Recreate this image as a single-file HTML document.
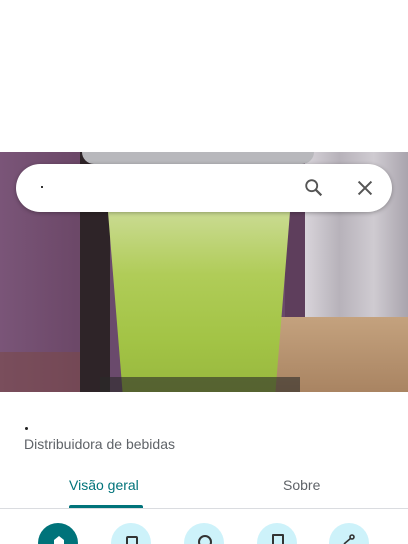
<!DOCTYPE html>
<html style="height:544px;overflow:hidden"><head><style>
body{margin:0;width:408px;height:544px;overflow:hidden;background:#fff;font-family:"Liberation Sans",Roboto,sans-serif;position:relative}
.ph{position:absolute;left:0;top:152px;width:408px;height:240px;overflow:hidden;background:#6a4a6c}
.ph div{position:absolute}
.sb{position:absolute;left:16px;top:164px;width:376px;height:48px;background:#fff;border-radius:24px;box-shadow:0 1px 4px rgba(0,0,0,.3)}
.c{position:absolute;top:523px;width:40px;height:40px;border-radius:50%;background:#cdf2fa}
</style></head><body>
<div class="ph">
 <div style="left:0;top:0;width:82px;height:240px;background:linear-gradient(90deg,#7a5578,#6b4767)"></div>
 <div style="left:0;top:200px;width:90px;height:40px;background:#7a4a4a;opacity:.6"></div>
 <div style="left:80px;top:0;width:30px;height:240px;background:#2e2428"></div>
 <div style="left:285px;top:0;width:22px;height:240px;background:#5e3e5c"></div>
 <div style="left:305px;top:0;width:103px;height:170px;background:linear-gradient(90deg,#d8d4da,#b7b2ba,#cfcbd1,#a9a4ad)"></div>
 <div style="left:275px;top:165px;width:133px;height:75px;background:linear-gradient(180deg,#c4a27e,#a98462)"></div>
 <div style="left:82px;top:0;width:232px;height:12px;background:#b8b8bc;border-radius:0 0 20px 20px"></div>
 <div style="left:108px;top:60px;width:182px;height:180px;background:linear-gradient(180deg,#cadb92,#b0cc58 35%,#a3c446 70%,#98b83e);clip-path:polygon(0 0,100% 0,92% 100%,8% 100%)"></div>
 <div style="left:100px;top:225px;width:200px;height:15px;background:#2a2a28;opacity:.6"></div>
</div>
<div class="sb">
 <div style="position:absolute;left:25px;top:22px;width:2px;height:2px;background:#333"></div>
 <svg style="position:absolute;left:287px;top:13px" width="22" height="22" viewBox="0 0 24 24"><circle cx="9.5" cy="9.5" r="6" fill="none" stroke="#555" stroke-width="2"/><path d="M14 14l6 6" stroke="#555" stroke-width="2.4"/></svg>
 <svg style="position:absolute;left:338px;top:13px" width="22" height="22" viewBox="0 0 24 24"><path d="M5 5l14 14M19 5L5 19" stroke="#555" stroke-width="2.2"/></svg>
</div>
<div style="position:absolute;left:25px;top:427px;width:3px;height:3px;background:#222;border-radius:50%"></div>
<div style="position:absolute;left:24px;top:436px;font-size:14px;color:#5f6368">Distribuidora de bebidas</div>
<div style="position:absolute;left:69px;top:477px;font-size:14px;color:#00737a">Visão geral</div>
<div style="position:absolute;left:283px;top:477px;font-size:14px;color:#5f6368">Sobre</div>
<div style="position:absolute;left:69px;top:505px;width:74px;height:3px;background:#00737a;border-radius:2px 2px 0 0"></div>
<div style="position:absolute;left:0;top:508px;width:408px;height:1px;background:#dadce0"></div>
<div class="c" style="left:38px;background:#00737a"></div>
<div class="c" style="left:111px"></div>
<div class="c" style="left:184px"></div>
<div class="c" style="left:257px"></div>
<div class="c" style="left:329px"></div>
<svg style="position:absolute;left:52px;top:535px" width="14" height="9"><path d="M2 9V5l5-4 5 4v4" fill="#fff"/></svg>
<div style="position:absolute;left:126px;top:536px;width:8px;height:10px;border:2px solid #333;border-radius:2px"></div>
<div style="position:absolute;left:198px;top:535px;width:10px;height:10px;border:2px solid #333;border-radius:50%"></div>
<div style="position:absolute;left:272px;top:534px;width:8px;height:12px;border:2px solid #333;border-radius:1px"></div>
<svg style="position:absolute;left:341px;top:534px" width="16" height="10"><circle cx="11" cy="3" r="2" fill="none" stroke="#333" stroke-width="1.6"/><path d="M3 10L10 4" stroke="#333" stroke-width="1.6"/></svg>
</body></html>
